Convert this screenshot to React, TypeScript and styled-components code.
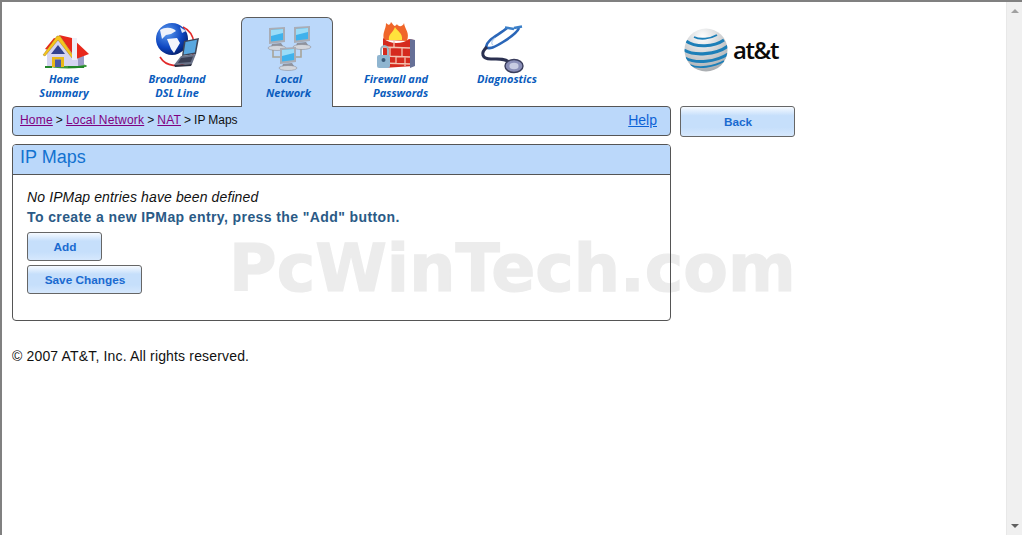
import styled, { createGlobalStyle } from 'styled-components';

const GlobalStyle = createGlobalStyle`
  html {
    height: 100%;
    overflow: hidden;
    background: #fff;
  }
  body {
    margin: 0;
    height: 100%;
    font-family: "Liberation Sans", Arial, sans-serif;
  }
`;

const Frame = styled.div`
  display: flex;
  height: 535px;
  box-sizing: border-box;
  border-top: 2px solid #808080;
  border-left: 2px solid #808080;
`;

const Page = styled.main`
  position: relative;
  flex: 1;
  padding: 15px 0 0 10px;
`;

const Scrollbar = styled.div`
  width: 16px;
  background: #f0f0f0;
  border-left: 1px solid #e8e8e8;
  box-sizing: border-box;
  display: flex;
  flex-direction: column;
  justify-content: space-between;
  align-items: center;
  padding: 7px 0;
`;

const Arrow = styled.span<{ $down?: boolean }>`
  width: 0;
  height: 0;
  border-left: 4px solid transparent;
  border-right: 4px solid transparent;
  ${({ $down }) => ($down ? 'border-top: 4px solid #606060;' : 'border-bottom: 4px solid #a0a0a0;')}
`;

const Watermark = styled.div`
  position: absolute;
  z-index: -1;
  left: 227px;
  top: 229px;
  font-family: "DejaVu Sans", sans-serif;
  font-weight: 700;
  font-size: 65px;
  line-height: 76px;
  color: #ececec;
  -webkit-text-stroke: 1.2px #ececec;
  white-space: nowrap;
  pointer-events: none;
`;

const Nav = styled.nav`
  display: flex;
  align-items: flex-end;
  height: 90px;
  margin-bottom: -1px;
`;

const Tab = styled.a<{ $width: number; $active?: boolean; $gap?: number; $top?: boolean }>`
  position: relative;
  z-index: 2;
  width: ${({ $width }) => $width}px;
  height: 90px;
  margin-left: ${({ $gap }) => $gap ?? 0}px;
  box-sizing: border-box;
  display: flex;
  flex-direction: column;
  align-items: center;
  justify-content: ${({ $top }) => ($top ? 'flex-start' : 'flex-end')};
  padding: ${({ $top }) => ($top ? '7px' : '0')} 0 7px ${({ $active }) => ($active ? '3px' : '0')};
  background: ${({ $active }) => ($active ? '#bbd8fa' : 'transparent')};
  border: 1px solid ${({ $active }) => ($active ? '#5c5c5c' : 'transparent')};
  border-bottom: none;
  border-radius: 6px 6px 0 0;
`;

const TabIcon = styled.svg<{ $shift?: number }>`
  display: block;
  overflow: visible;
  margin-bottom: 2px;
  margin-left: ${({ $shift }) => $shift ?? 0}px;
`;

const TabLabel = styled.span<{ $right?: boolean }>`
  font-family: "Open Sans", sans-serif;
  font-style: italic;
  font-weight: 700;
  font-size: 11px;
  line-height: 14px;
  color: #0a5cbd;
  text-align: ${({ $right }) => ($right ? 'right' : 'center')};
  white-space: pre-line;
`;

const Logo = styled.div`
  display: flex;
  align-items: center;
  gap: 5px;
  margin: 0 0 35px 129px;
`;

const LogoText = styled.span`
  font-family: "Open Sans", sans-serif;
  font-weight: 600;
  font-size: 24px;
  line-height: 28px;
  letter-spacing: -1.4px;
  color: #0a0a0a;
`;

const Columns = styled.div`
  display: flex;
  align-items: flex-start;
  gap: 9px;
`;

const LeftColumn = styled.div`
  width: 659px;
`;

const Breadcrumb = styled.div`
  display: flex;
  justify-content: space-between;
  align-items: center;
  height: 30px;
  box-sizing: border-box;
  padding: 0 13px 2px 7px;
  background: #bbd8fa;
  border: 1px solid #555;
  border-radius: 4px;
  font-size: 12px;
  word-spacing: -0.3px;
  color: #111;
`;

const Crumb = styled.a`
  color: #800080;
  text-decoration: underline;
  letter-spacing: 0.2px;
`;

const HelpLink = styled.a`
  color: #0d62d6;
  font-size: 14px;
  text-decoration: underline;
`;

const Panel = styled.section`
  margin-top: 8px;
  height: 177px;
  box-sizing: border-box;
  border: 1px solid #555;
  border-radius: 4px;
`;

const PanelTitle = styled.h2`
  margin: 0;
  height: 30px;
  box-sizing: border-box;
  padding-left: 7px;
  background: #bbd8fa;
  border-bottom: 1px solid #555;
  border-radius: 3px 3px 0 0;
  font-size: 18px;
  font-weight: 400;
  line-height: 25px;
  color: #1272d0;
`;

const PanelBody = styled.div`
  display: flex;
  flex-direction: column;
  align-items: flex-start;
  padding: 12px 14px 0;
`;

const Note = styled.div`
  font-size: 14px;
  font-style: italic;
  line-height: 20px;
  letter-spacing: 0.12px;
  color: #111;
`;

const Hint = styled.div`
  font-size: 14px;
  font-weight: 700;
  line-height: 20px;
  letter-spacing: 0.4px;
  color: #2a5a86;
  margin-bottom: 5px;
`;

const Button = styled.button<{ $width: number; $height?: number }>`
  width: ${({ $width }) => $width}px;
  height: ${({ $height }) => $height ?? 29}px;
  margin-bottom: 4px;
  padding: 0 0 0 1px;
  background: linear-gradient(#f6faff 0%, #c6dffb 30%, #c6dffb 70%, #d6e8fd 100%);
  border: 1px solid #666;
  border-radius: 3px;
  font-family: "Liberation Sans", Arial, sans-serif;
  font-size: 11.8px;
  font-weight: 700;
  color: #1a6ad0;
`;

const Footer = styled.p`
  margin: 27px 0 0;
  font-size: 14px;
  line-height: 16px;
  letter-spacing: 0.16px;
  color: #111;
`;

const HomeIcon = () => (
  <TabIcon width="48" height="35" viewBox="0 0 48 35" $shift={3}>
    <ellipse cx="26" cy="31" rx="19" ry="2.4" fill="#3f9a3c" />
    <path d="M5 17 L5 31 L36 31 L36 17 L16 3 Z" fill="#d5d4f2" />
    <path d="M36 18 L42 21 L42 30 L36 31 Z" fill="#9c9cc8" />
    <path d="M17 0 L30 3 L47 19 L34 24 Z" fill="#e8281c" />
    <path d="M3 14 L12 3 L15 4 L7 15 Z" fill="#e8281c" />
    <path d="M1 20 L15 1 L18 1 L32 22 L30 23 L16 5 L3 21 Z" fill="#f6c51c" stroke="#8a6a14" strokeWidth="0.4" />
    <path d="M16 10 L23 19 L9 19 Z" fill="#33428f" />
    <rect x="30" y="3" width="5" height="22" fill="#eeeef8" />
    <path d="M10 32 V22 H22 V32 H19 V24.5 H13 V32 Z" fill="#e9b818" />
    <rect x="13" y="24.5" width="6" height="7.5" fill="#4a5aa8" />
    <path d="M3 31 H10 L10 33 H3 Z M26 31 H42 V33 H26 Z" fill="#23872a" />
  </TabIcon>
);

const BroadbandIcon = () => (
  <TabIcon width="50" height="47" viewBox="0 0 50 47">
    <defs>
      <radialGradient id="bbGlobe" cx="0.35" cy="0.3" r="0.8">
        <stop offset="0" stopColor="#5c9cf0" />
        <stop offset="0.6" stopColor="#0d45c0" />
        <stop offset="1" stopColor="#04185c" />
      </radialGradient>
    </defs>
    <path d="M31 4 C44 10 46 30 36 38 C28 45 14 44 8 34" fill="none" stroke="#e22a2a" strokeWidth="1.6" />
    <circle cx="20" cy="16" r="16" fill="url(#bbGlobe)" />
    <path d="M8 7 C14 3 22 5 24 8 L19 11 L14 12 L10 16 Z" fill="#eef2fb" />
    <path d="M15 16 L25 15 L28 20 L22 30 L19 26 Z" fill="#f4f6fc" />
    <path d="M28 4 L34 8 L30 10 Z" fill="#dfe8f8" />
    <path d="M32 18 L47 15 L44 31 L30 33 Z" fill="#3e4658" />
    <path d="M33.5 19 L45 16.8 L42.8 29.5 L31.6 31.4 Z" fill="#59a8e0" />
    <path d="M29 33 L44 31 L40 41 L22 42 Z" fill="#6a7288" />
    <path d="M29 35 L41 33.5 L38.6 39 L26 40 Z" fill="#3a4055" />
    <path d="M22 42 L40 41 L39 43 L23 44 Z" fill="#2a2f40" />
  </TabIcon>
);

const Monitor = ({ x, y }: { x: number; y: number }) => (
  <g transform={`translate(${x} ${y})`}>
    <path d="M2 1 L18 0 L18 15 L2 17 Z" fill="#a9adb6" />
    <path d="M4 3 L16 2 L16 13 L4 14.5 Z" fill="#3fb2ec" />
    <path d="M4 3 L16 2 L16 6 L4 9 Z" fill="#9adcf8" />
    <path d="M5 17 L14 16 L16 19 L4 20 Z" fill="#8f939e" />
    <ellipse cx="10" cy="21" rx="9" ry="2.5" fill="#d3d6dc" stroke="#80838c" strokeWidth="0.5" />
  </g>
);

const NetworkIcon = () => (
  <TabIcon width="46" height="44" viewBox="0 0 46 44">
    <path d="M7 22 V31 H14 M35 22 V31 H28" fill="none" stroke="#a8a498" strokeWidth="1.6" />
    <Monitor x={1} y={1} />
    <Monitor x={26} y={0} />
    <Monitor x={12} y={21} />
  </TabIcon>
);

const FirewallIcon = () => (
  <TabIcon width="42" height="48" viewBox="0 0 42 48">
    <path d="M9 18 C7 10 11 8 11 1 C14 4 15 3 16 0 C19 3 19 6 22 2 C23 5 28 5 29 1 C30 8 35 10 32 19 Z" fill="#f0662a" />
    <path d="M14 18 C13 12 18 11 20 5 C22 9 28 11 27 18 Z" fill="#ffe23c" />
    <path d="M8 16 C15 23 28 22 34 17 L39 18 V44 L8 46 Z" fill="#d52a1e" />
    <path d="M35 17 L40 18 V44 L35 46 Z" fill="#667097" />
    <path d="M8 25 L35 26 M8 34 L35 35 M8 41 L35 42 M19 18 V26 M27 26 V35 M15 26 V34 M21 35 V42 M30 35 V44" stroke="#f3c2b0" strokeWidth="1.3" fill="none" />
    <path d="M6 33 V28 a3.5 4 0 0 1 7 0 V33" fill="none" stroke="#9cb8c8" strokeWidth="2" />
    <rect x="2" y="33" width="13" height="13" rx="2" fill="#8fb5d0" />
    <circle cx="8.5" cy="38" r="2" fill="#3a5a78" />
  </TabIcon>
);

const StethoscopeIcon = () => (
  <TabIcon width="44" height="45" viewBox="0 0 44 45" $shift={-8}>
    <path d="M26 3 C18 10 6 14 5 22 C8 25 14 22 22 17 C30 12 36 8 38 3" fill="none" stroke="#2a66b8" strokeWidth="2.6" />
    <path d="M14 13 C10 16 10 19 12 20" fill="none" stroke="#b8d0ee" strokeWidth="1.2" />
    <path d="M6 22 C-1 28 1 34 10 34 C17 34 23 33 28 37" fill="none" stroke="#2a3050" strokeWidth="3" />
    <path d="M24 2.5 L33 4 M33 3 L41 1.5" stroke="#3a7fc8" strokeWidth="2.4" />
    <ellipse cx="33" cy="41" rx="9" ry="6.5" fill="#8a8fb8" stroke="#3a3d5c" strokeWidth="1.4" />
    <ellipse cx="33" cy="41" rx="4.6" ry="3.2" fill="#c8cce2" />
  </TabIcon>
);

const GlobeLogo = () => (
  <svg width="44" height="44" viewBox="0 0 44 44">
    <defs>
      <radialGradient id="attGlobe" cx="0.42" cy="0.2" r="0.85">
        <stop offset="0" stopColor="#ffffff" />
        <stop offset="1" stopColor="#a4a8ac" />
      </radialGradient>
      <clipPath id="attClip">
        <circle cx="22" cy="22" r="21.5" />
      </clipPath>
    </defs>
    <circle cx="22" cy="22" r="21.5" fill="url(#attGlobe)" />
    <g clipPath="url(#attClip)" fill="none" stroke="#1d7fb8">
      <path d="M10 9 C16 12 26 11 33 7" strokeWidth="1.8" />
      <path d="M2 13 C12 20 30 19 40 12" strokeWidth="3" />
      <path d="M0 22 C10 28 32 27 44 18" strokeWidth="3.2" />
      <path d="M1 30 C12 36 32 34 44 26" strokeWidth="2.8" />
      <path d="M6 37 C14 41 30 39 40 33" strokeWidth="1.8" />
    </g>
  </svg>
);

export default function App() {
  return (
    <>
      <GlobalStyle />
      <Frame>
        <Page>
          <Watermark>PcWinTech.com</Watermark>
          <Nav>
            <Tab $width={104}>
              <HomeIcon />
              <TabLabel>{'Home\nSummary'}</TabLabel>
            </Tab>
            <Tab $width={122}>
              <BroadbandIcon />
              <TabLabel>{'Broadband\nDSL Line'}</TabLabel>
            </Tab>
            <Tab $width={92} $gap={3} $active>
              <NetworkIcon />
              <TabLabel>{'Local\nNetwork'}</TabLabel>
            </Tab>
            <Tab $width={126}>
              <FirewallIcon />
              <TabLabel $right>{'Firewall and\nPasswords'}</TabLabel>
            </Tab>
            <Tab $width={96} $top>
              <StethoscopeIcon />
              <TabLabel>Diagnostics</TabLabel>
            </Tab>
            <Logo>
              <GlobeLogo />
              <LogoText>at&amp;t</LogoText>
            </Logo>
          </Nav>
          <Columns>
            <LeftColumn>
              <Breadcrumb>
                <span>
                  <Crumb>Home</Crumb> &gt; <Crumb>Local Network</Crumb> &gt; <Crumb>NAT</Crumb> &gt; IP Maps
                </span>
                <HelpLink>Help</HelpLink>
              </Breadcrumb>
              <Panel>
                <PanelTitle>IP Maps</PanelTitle>
                <PanelBody>
                  <Note>No IPMap entries have been defined</Note>
                  <Hint>To create a new IPMap entry, press the "Add" button.</Hint>
                  <Button $width={75}>Add</Button>
                  <Button $width={115}>Save Changes</Button>
                </PanelBody>
              </Panel>
              <Footer>© 2007 AT&amp;T, Inc. All rights reserved.</Footer>
            </LeftColumn>
            <Button $width={115} $height={31}>Back</Button>
          </Columns>
        </Page>
        <Scrollbar>
          <Arrow />
          <Arrow $down />
        </Scrollbar>
      </Frame>
    </>
  );
}
